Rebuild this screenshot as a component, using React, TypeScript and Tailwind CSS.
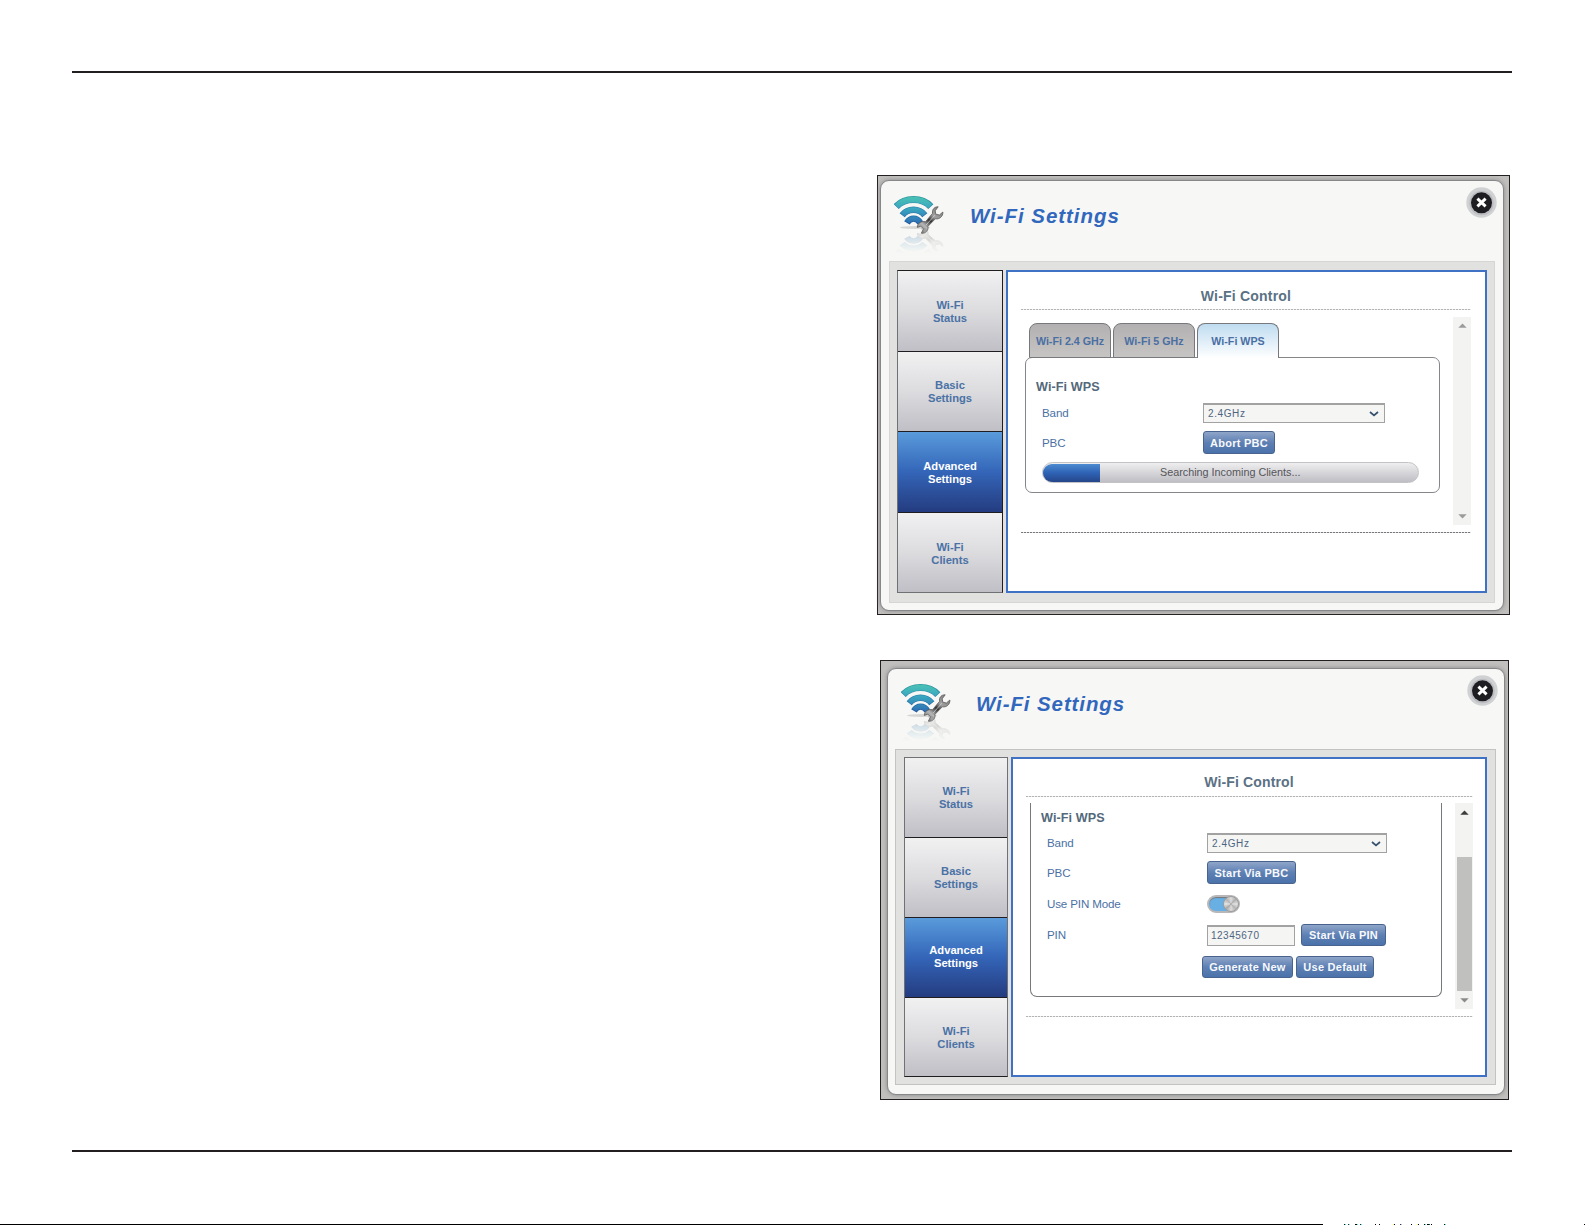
/**
 * @description
 * Manual page with two views of the Wi-Fi Settings dialog:
 * WPS search in progress, and WPS with PIN mode enabled.
 */
import React from 'react'

type NavItem = {
  lines: [string, string]
  sizeClass: string
  active?: boolean
}

type DialogProps = {
  id: string
  frameClass: string
  panelClass: string
  iconClass: string
  titleClass: string
  closeClass: string
  bodyClass: string
  navClass: string
  tabClasses: string[]
  contentClass: string
  children: React.ReactNode
}

const NAV_ITEMS: Omit<NavItem, 'sizeClass'>[] = [
  { lines: ['Wi-Fi', 'Status'] },
  { lines: ['Basic', 'Settings'] },
  { lines: ['Advanced', 'Settings'], active: true },
  { lines: ['Wi-Fi', 'Clients'] },
]

function WifiToolsIcon({ id, className }: { id: string; className: string }) {
  return (
    <svg className={className} width="52" height="60" viewBox="0 0 52 60" fill="none">
      <defs>
        <linearGradient id={`${id}-wave`} x1="0" y1="0" x2="0" y2="30" gradientUnits="userSpaceOnUse">
          <stop offset="0" stopColor="#4cc6b3" />
          <stop offset="0.45" stopColor="#3aa6c0" />
          <stop offset="1" stopColor="#2b68b4" />
        </linearGradient>
        <linearGradient id={`${id}-edge`} x1="0" y1="0" x2="0" y2="30" gradientUnits="userSpaceOnUse">
          <stop offset="0" stopColor="#2a9c9c" />
          <stop offset="0.5" stopColor="#2a7fae" />
          <stop offset="1" stopColor="#1f5196" />
        </linearGradient>
        <linearGradient id={`${id}-steel`} x1="24" y1="40" x2="49" y2="12" gradientUnits="userSpaceOnUse">
          <stop offset="0" stopColor="#6d6d6d" />
          <stop offset="0.3" stopColor="#b5b5b5" />
          <stop offset="0.5" stopColor="#333333" />
          <stop offset="0.65" stopColor="#a0a0a0" />
          <stop offset="1" stopColor="#777777" />
        </linearGradient>
        <linearGradient id={`${id}-fade`} x1="0" y1="36" x2="0" y2="58" gradientUnits="userSpaceOnUse">
          <stop offset="0" stopColor="#fff" stopOpacity="0.26" />
          <stop offset="1" stopColor="#fff" stopOpacity="0" />
        </linearGradient>
        <mask id={`${id}-mask`}>
          <rect x="0" y="30" width="52" height="30" fill={`url(#${id}-fade)`} />
        </mask>
        <g id={`${id}-art`}>
          <g stroke={`url(#${id}-edge)`}>
            <path d="M2.2 11.6C11 2.2 28 2.2 36.8 11.6" strokeWidth="7" />
            <path d="M8.2 20.2C14 13 25 13 30.8 20.2" strokeWidth="6.6" />
            <path d="M12.9 27.8C16.3 22.2 22.9 22.2 26.3 27.8" strokeWidth="6.4" />
          </g>
          <g stroke={`url(#${id}-wave)`}>
            <path d="M2.7 11.2C11.3 2.4 27.7 2.4 36.3 11.2" strokeWidth="5.6" />
            <path d="M8.6 19.7C14.3 13.2 24.7 13.2 30.4 19.7" strokeWidth="5.2" />
            <path d="M13.3 27.2C16.6 22.4 22.6 22.4 25.9 27.2" strokeWidth="4.8" />
          </g>
          <path
            d="M44.2 11.8C40.5 11.6 37.8 14.6 38.6 18.3L31.5 26.8C27.4 25.6 23.4 28.4 23.3 32.4L26.8 31.2L29.6 33.8L27.3 38.2C31.6 39 34.8 35.1 34 31.3L41.3 23.8C45.4 24.6 49.2 21.4 48.9 17L45.4 20L41.8 19.2L41.2 15.8Z"
            fill={`url(#${id}-steel)`}
            stroke="#5c5c5c"
            strokeWidth="0.8"
            strokeLinejoin="round"
          />
          <path d="M32 30.1L41 20.1" stroke="#e6e6e6" strokeWidth="0.9" strokeOpacity="0.7" />
        </g>
      </defs>
      <ellipse cx="21" cy="32.5" rx="15" ry="1.4" fill="#8a8a8a" fillOpacity="0.3" />
      <use href={`#${id}-art`} />
      <g mask={`url(#${id}-mask)`}>
        <use href={`#${id}-art`} transform="translate(0 66) scale(1 -0.85)" />
      </g>
    </svg>
  )
}

function CloseButton({ className }: { className: string }) {
  return (
    <button type="button" aria-label="Close" className={className}>
      <svg width="31" height="31" viewBox="0 0 31 31">
        <circle cx="15.5" cy="15.5" r="15.2" fill="#d0d1d3" />
        <circle cx="15.5" cy="16" r="12.2" fill="#bcbdc1" />
        <circle cx="15.5" cy="15.8" r="10.5" fill="#1d1d22" />
        <path d="M11.4 11.7L19.6 19.3M19.6 11.7L11.4 19.3" stroke="#fff" strokeWidth="3" />
      </svg>
    </button>
  )
}

function SettingsDialog({ children, ...props }: DialogProps) {
  return (
    <section className={`border border-[#231f20] bg-[#c1bfbe] ${props.frameClass}`}>
      <div
        className={`flex flex-col rounded-[9px] border border-[#858789] bg-[#f7f7f5] shadow-[0_0_4px_#888] ${props.panelClass}`}
      >
        <header className="flex items-start">
          <WifiToolsIcon id={props.id} className={props.iconClass} />
          <h1
            className={`text-[20.5px] leading-6 font-bold whitespace-nowrap text-[#3167bd] italic ${props.titleClass}`}
          >
            Wi-Fi Settings
          </h1>
          <CloseButton className={props.closeClass} />
        </header>
        <div className={`flex border bg-[#e1e1e0] ${props.bodyClass}`}>
          <nav className={`flex flex-col border ${props.navClass}`}>
            {NAV_ITEMS.map((item, i) => (
              <SideTab key={i} {...item} sizeClass={props.tabClasses[i]} />
            ))}
          </nav>
          <main className={`flex flex-col border-2 border-[#3f71c4] bg-white ${props.contentClass}`}>{children}</main>
        </div>
      </div>
    </section>
  )
}

function SideTab({ lines, sizeClass, active }: NavItem) {
  const tone = active
    ? 'bg-linear-to-b from-[#5a9bdb] via-[#3465b8] to-[#243c80] text-white'
    : 'bg-linear-to-b from-[#f1f1f2] via-[#dcdbde] to-[#c0bfc6] text-[#4a72a5]'
  return (
    <div
      className={`flex flex-col items-center border-b border-[#1f1d20] text-[11.2px] leading-[13px] font-bold last:border-b-0 ${sizeClass} ${tone}`}
    >
      <span>{lines[0]}</span>
      <span>{lines[1]}</span>
    </div>
  )
}

function ActionButton({ label, className }: { label: string; className: string }) {
  return (
    <button
      type="button"
      className={`flex shrink-0 items-center justify-center rounded-[3px] border border-[#48648e] bg-linear-to-b from-[#8fa5c9] via-[#5e80b3] via-50% to-[#4a72aa] pt-px text-[11px] leading-none font-bold tracking-[0.25px] whitespace-nowrap text-[#f7f9fc] ${className}`}
    >
      {label}
    </button>
  )
}

function BandSelect({ className }: { className: string }) {
  return (
    <div
      className={`flex items-center justify-between border border-t-2 border-[#a2a2a2] bg-[#f5f5f4] pr-[5px] pl-1 text-[10px] leading-none tracking-[0.6px] text-[#4d6580] ${className}`}
    >
      <span>2.4GHz</span>
      <svg width="10" height="6" viewBox="0 0 10 6" fill="none">
        <path d="M1 1L5 4.4L9 1" stroke="#36506f" strokeWidth="1.7" />
      </svg>
    </div>
  )
}

function DottedRule({ className }: { className: string }) {
  return <div className={`h-px shrink-0 ${className}`} />
}

function Arrow({ down, className }: { down?: boolean; className?: string }) {
  return (
    <svg width="9" height="5" viewBox="0 0 9 5" className={className}>
      <path d={down ? 'M0.3 0.3H8.7L4.5 4.6Z' : 'M0.3 4.7H8.7L4.5 0.4Z'} fill="currentColor" />
    </svg>
  )
}

function Label({ text, className }: { text: string; className: string }) {
  return (
    <span
      className={`shrink-0 text-[11.6px] leading-none tracking-[-0.15px] whitespace-nowrap text-[#4b71a4] ${className}`}
    >
      {text}
    </span>
  )
}

const lightRule = 'bg-[repeating-linear-gradient(90deg,#b4b4b4_0_2px,#ececec_2px_3px)]'
const darkRule = 'bg-[repeating-linear-gradient(90deg,#77787b_0_2px,#e0e0e0_2px_3px)]'

function SearchingView() {
  return (
    <>
      <h2 className="mt-[15px] pr-px text-center text-sm leading-[18px] font-bold tracking-[0.2px] text-[#5b7184]">
        Wi-Fi Control
      </h2>
      <DottedRule className={`mt-1 ml-[13px] w-[450px] ${lightRule}`} />
      <div className="mt-[7px] flex h-[208px] shrink-0">
        <div className="ml-[17px] flex w-[415px] flex-col pt-[6px]">
          <div className="z-10 ml-1 flex gap-[2px] text-[10.7px] font-bold text-[#4a6fa3]">
            <div className="flex h-[35px] w-[82px] items-center justify-center rounded-t-[8px] border border-[#77787b] bg-linear-to-b from-[#b2b0b0] to-[#c7c5c4] pt-px whitespace-nowrap">
              Wi-Fi 2.4 GHz
            </div>
            <div className="flex h-[35px] w-[82px] items-center justify-center rounded-t-[8px] border border-[#77787b] bg-linear-to-b from-[#b2b0b0] to-[#c7c5c4] pt-px whitespace-nowrap">
              Wi-Fi 5 GHz
            </div>
            <div className="flex h-[35px] w-[82px] items-center justify-center rounded-t-[8px] border border-b-0 border-[#77787b] bg-linear-to-b from-[#bfdcf0] to-white whitespace-nowrap">
              Wi-Fi WPS
            </div>
          </div>
          <div className="-mt-px flex h-[136px] flex-col rounded-[7px] border border-[#85868a]">
            <h3 className="mt-[23px] ml-[10px] text-[12.6px] leading-[13px] font-bold tracking-[0.1px] text-[#53697b]">
              Wi-Fi WPS
            </h3>
            <div className="mt-[9px] ml-4 flex h-5 items-center">
              <Label text="Band" className="w-[161px]" />
              <BandSelect className="h-5 w-[182px]" />
            </div>
            <div className="mt-[8px] ml-4 flex h-[23px] items-center">
              <Label text="PBC" className="w-[161px] pt-px" />
              <ActionButton label="Abort PBC" className="h-[23px] w-[72px]" />
            </div>
            <div className="mt-[8px] ml-4 flex h-[21px] w-[377px] items-center rounded-full border border-[#c3c2c4] bg-linear-to-b from-[#eeeeef] to-[#bfbec4]">
              <div className="h-[18px] w-[57px] rounded-l-full bg-linear-to-b from-[#4c8bd1] via-[#2f62b5] to-[#254689]" />
              <span className="ml-[60px] text-[10.8px] leading-none whitespace-nowrap text-[#55555a]">
                Searching Incoming Clients...
              </span>
            </div>
          </div>
        </div>
        <div className="ml-[13px] flex w-[18px] flex-col items-center justify-between bg-[#f3f3f2] py-[6px] text-[#9b9b9b]">
          <Arrow />
          <Arrow down />
        </div>
      </div>
      <DottedRule className={`mt-[7px] ml-[13px] w-[450px] ${darkRule}`} />
    </>
  )
}

function Toggle() {
  return (
    <div className="flex h-[18px] w-[33px] items-center justify-end rounded-full border-2 border-[#b9b7b7] bg-[#68afe4] shadow-[inset_0_1px_1px_#777]">
      <div className="-mr-px h-4 w-4 shrink-0 rounded-full border border-[#9d9d9d] bg-[conic-gradient(#ddd,#b0b0b0,#e2e2e2,#b4b4b4,#ddd,#aaa,#e4e4e4,#b5b5b5,#ddd)]" />
    </div>
  )
}

function PinView() {
  return (
    <>
      <h2 className="mt-[14px] text-center text-sm leading-[18px] font-bold tracking-[0.15px] text-[#5b7184]">
        Wi-Fi Control
      </h2>
      <DottedRule className={`mt-[5px] ml-[13px] w-[447px] ${lightRule}`} />
      <div className="mt-[6px] flex h-[206px] shrink-0">
        <div className="ml-[17px] flex h-[194px] w-[412px] flex-col rounded-b-[7px] border border-t-0 border-[#77787b]">
          <h3 className="mt-[9px] ml-[10px] text-[12.6px] leading-[13px] font-bold tracking-[0.1px] text-[#53697b]">
            Wi-Fi WPS
          </h3>
          <div className="mt-[8px] ml-4 flex h-5 items-center">
            <Label text="Band" className="w-[160px]" />
            <BandSelect className="h-5 w-[180px]" />
          </div>
          <div className="mt-[8px] ml-4 flex h-[23px] items-center">
            <Label text="PBC" className="w-[160px] pt-px" />
            <ActionButton label="Start Via PBC" className="h-[23px] w-[89px]" />
          </div>
          <div className="mt-[11px] ml-4 flex h-[18px] items-center">
            <Label text="Use PIN Mode" className="w-[160px]" />
            <Toggle />
          </div>
          <div className="mt-[10px] ml-4 flex h-[23px] items-center">
            <Label text="PIN" className="w-[160px] pt-px" />
            <div className="mt-px flex h-[21px] w-[88px] items-center border border-t-2 border-[#a2a2a2] bg-[#f5f5f4] pl-[3px] text-[10px] leading-none tracking-[0.5px] text-[#4d6580]">
              12345670
            </div>
            <ActionButton label="Start Via PIN" className="ml-[6px] h-[22px] w-[85px]" />
          </div>
          <div className="mt-[10px] ml-[171px] flex gap-[3px]">
            <ActionButton label="Generate New" className="h-[22px] w-[91px]" />
            <ActionButton label="Use Default" className="h-[22px] w-[78px]" />
          </div>
        </div>
        <div className="ml-[13px] flex w-[18px] flex-col items-center bg-[#f3f3f2] pt-[7px]">
          <Arrow className="text-[#3c3c3c]" />
          <div className="mt-[42px] h-[134px] w-[15px] bg-[#c0c0be]" />
          <Arrow down className="mt-[7px] text-[#8a8a8a]" />
        </div>
      </div>
      <DottedRule className={`mt-[7px] ml-[13px] w-[447px] ${lightRule}`} />
    </>
  )
}

// Tops of the clipped line that starts below the page edge
const EDGE_MARKS: [number, number, string][] = [
  [59, 1, '#000'], [60, 1, '#4ee'], [63, 1, '#422'], [64, 1, '#6ee'], [70, 2, '#000'], [72, 1, '#4ee'],
  [75, 1, '#422'], [76, 1, '#4ee'], [90, 1, '#000'], [94, 1, '#000'], [108, 1, '#ff6'], [109, 1, '#003'],
  [115, 1, '#a02'], [116, 1, '#4ee'], [126, 1, '#000'], [132, 1, '#ff6'], [133, 1, '#003'], [139, 1, '#000'],
  [140, 1, '#4ee'], [142, 2, '#000'], [144, 1, '#066'], [146, 1, '#000'], [159, 1, '#000'], [160, 1, '#4ee'],
  [299, 1, '#000'],
]

export default function App() {
  return (
    <div className="flex h-[1225px] w-[1585px] flex-col overflow-hidden bg-white font-['Liberation_Sans',Arial,sans-serif]">
      <div className="mt-[71px] ml-[72px] h-[2px] w-[1440px] shrink-0 bg-[#231f20]" />
      <SettingsDialog
        id="search"
        frameClass="mt-[102px] ml-[877px] h-[440px] w-[633px] shrink-0"
        panelClass="mt-[4px] ml-[2px] h-[431px] w-[624px]"
        iconClass="mt-[14px] ml-[13px] shrink-0"
        titleClass="mt-[23px] ml-[24px] tracking-[0.95px]"
        closeClass="mt-[6px] mr-[6px] ml-auto h-[31px]"
        bodyClass="mt-[6px] ml-[8px] h-[342px] w-[606px] border-[#d6d6d6] pt-[8px] pl-[7px]"
        navClass="h-[323px] w-[106px] border-t-[#1f1d20] border-r-[#1f1d20] border-b-[#707174] border-l-[#707174]"
        tabClasses={['h-[81px] pt-[28px]', 'h-[80px] pt-[27px]', 'h-[81px] pt-[28px]', 'h-[79px] pt-[28px]']}
        contentClass="ml-[3px] h-[323px] w-[481px]"
      >
        <SearchingView />
      </SettingsDialog>
      <SettingsDialog
        id="pin"
        frameClass="mt-[45px] ml-[880px] h-[440px] w-[629px] shrink-0"
        panelClass="mt-[7px] ml-[6px] h-[427px] w-[618px]"
        iconClass="mt-[14px] ml-[13px] shrink-0"
        titleClass="mt-[23px] ml-[23px] tracking-[0.9px]"
        closeClass="mt-[6px] mr-[6px] ml-auto h-[31px]"
        bodyClass="mt-[6px] ml-[7px] h-[336px] w-[601px] border-[#c2c3c2] pt-[7px] pl-[8px]"
        navClass="h-[320px] w-[104px] border-t-[#707174] border-r-[#707174] border-b-[#1f1d20] border-l-[#707174]"
        tabClasses={['h-[80px] pt-[27px]', 'h-[80px] pt-[27px]', 'h-[80px] pt-[26px]', 'h-[78px] pt-[27px]']}
        contentClass="ml-[3px] h-[320px] w-[476px]"
      >
        <PinView />
      </SettingsDialog>
      <div className="mt-[50px] ml-[72px] h-[2px] w-[1440px] shrink-0 bg-[#231f20]" />
      <div className="mt-auto flex h-px shrink-0">
        <div className="h-px w-[1323px] bg-black" />
        <svg width="262" height="1" viewBox="38 0 262 1" shapeRendering="crispEdges">
          {EDGE_MARKS.map(([x, width, fill]) => (
            <rect key={x} x={x} y="0" width={width} height="1" fill={fill} />
          ))}
        </svg>
      </div>
    </div>
  )
}
